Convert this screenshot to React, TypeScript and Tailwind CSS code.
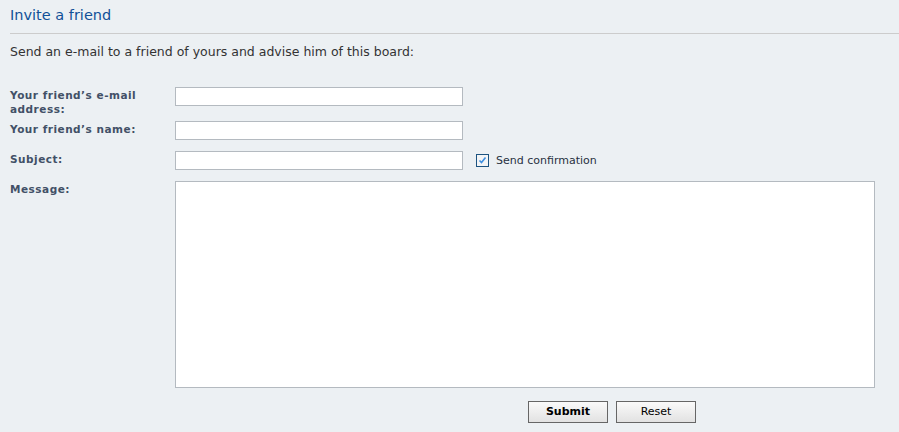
export default function App() {
  const font = { fontFamily: '"DejaVu Sans", Verdana, sans-serif' };
  const lbl = "w-[165px] shrink-0 text-[10.5px] font-bold leading-[14px] tracking-[0.5px] text-[#425067] pt-[1px]";
  return (
    <div className="w-[899px] h-[432px] bg-[#ECF0F3] overflow-hidden text-[#28313F]" style={font}>
      <div className="pl-[10px]">
        <h2 className="text-[14.5px] leading-[31px] h-[34px] text-[#115098] font-normal border-b border-[#CCCCCC]">Invite a friend</h2>
        <p className="text-[12.5px] leading-[16px] mt-[10px] text-[#333333]">Send an e-mail to a friend of yours and advise him of this board:</p>
        <div className="mt-[27px] flex flex-col">
          <div className="flex items-start h-[34px]">
            <label className={lbl}>Your friend’s e-mail<br />address:</label>
            <div className="w-[288px] h-[19px] bg-white border border-[#B4BAC0]" />
          </div>
          <div className="flex items-start h-[30px]">
            <label className={lbl}>Your friend’s name:</label>
            <div className="w-[288px] h-[19px] bg-white border border-[#B4BAC0]" />
          </div>
          <div className="flex items-start h-[30px]">
            <label className={lbl}>Subject:</label>
            <div className="w-[288px] h-[19px] bg-white border border-[#B4BAC0]" />
            <div className="ml-[13px] mt-[3px] w-[13px] h-[13px] border border-[#1C5380] bg-[#F2F4F6] flex items-center justify-center">
              <svg width="9" height="9" viewBox="0 0 9 9"><path d="M1.5 4.5 L3.5 6.5 L7.5 1.5" stroke="#3D8EE0" strokeWidth="1.6" fill="none" /></svg>
            </div>
            <span className="ml-[7px] text-[11px] leading-[19px] text-[#28313F]">Send confirmation</span>
          </div>
          <div className="flex items-start">
            <label className={lbl}>Message:</label>
            <div className="w-[700px] h-[207px] bg-white border border-[#B4BAC0]" />
          </div>
          <div className="flex gap-[8px] pl-[518px] mt-[13px]">
            <button className="w-[80px] h-[22px] border border-[#666666] bg-gradient-to-b from-[#FAFAFA] to-[#E2E2E2] text-[11px] font-bold text-black">Submit</button>
            <button className="w-[80px] h-[22px] border border-[#666666] bg-gradient-to-b from-[#FAFAFA] to-[#E2E2E2] text-[11px] text-black">Reset</button>
          </div>
        </div>
      </div>
    </div>
  );
}
